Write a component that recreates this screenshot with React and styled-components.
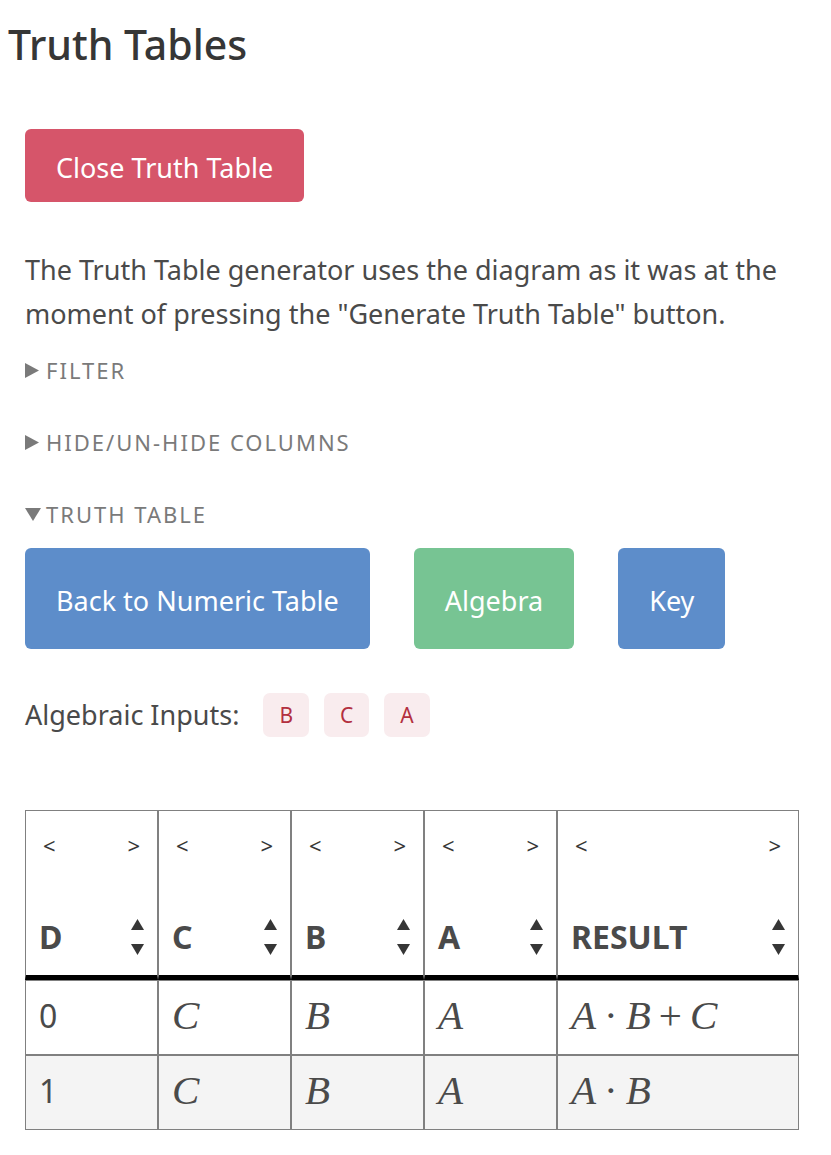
import React from "react";
import styled, { createGlobalStyle } from "styled-components";

const GlobalStyle = createGlobalStyle`
  *, *::before, *::after { box-sizing: border-box; }
  body {
    margin: 0;
    background: #fff;
    color: #4a4a4a;
    font-family: "Segoe UI", "Noto Sans", sans-serif;
    font-size: 27px;
    line-height: 44px;
  }
`;

const Page = styled.main`
  padding: 12px 32px 24px 25px;
`;

const Title = styled.h1`
  margin: 0 0 53px -17px;
  color: #363636;
  font-size: 41px;
  font-weight: 500;
  line-height: 64px;
`;

const COLORS = { danger: "#d6556a", info: "#5d8dca", success: "#77c493" };

const Button = styled.button`
  display: block;
  padding: ${(p) => (p.$tall ? "30px 31px 26px" : "16px 31px 12px")};
  border: 0;
  border-radius: 6px;
  background: ${(p) => COLORS[p.$tone]};
  color: #fff;
  font: inherit;
  line-height: 45px;
  white-space: nowrap;
  cursor: pointer;
`;

const Intro = styled.p`
  margin: 46px 0 12px;
`;

const Section = styled.details`
  margin-bottom: 28px;
`;

const Summary = styled.summary`
  display: flex;
  align-items: center;
  gap: 5px;
  list-style: none;
  color: #7a7a7a;
  font-size: 22px;
  letter-spacing: 2px;
  text-transform: uppercase;
  cursor: pointer;

  &::-webkit-details-marker { display: none; }

  svg {
    width: 16px;
    height: 16px;
    fill: currentColor;
  }
`;

const Toolbar = styled.div`
  display: flex;
  flex-wrap: wrap;
  gap: 44px;
  margin: 12px 0 44px;
`;

const Inputs = styled.div`
  display: flex;
  align-items: center;
  gap: 15px;
  margin-bottom: 73px;
`;

const InputsLabel = styled.span`
  margin-right: 9px;
`;

const Tag = styled.code`
  padding: 0 16px;
  border-radius: 7px;
  background: #f9ecee;
  color: #b3303f;
  font-family: inherit;
  font-size: 21px;
`;

const Table = styled.table`
  width: 100%;
  table-layout: fixed;
  border-collapse: separate;
  border-spacing: 0;
`;

const Column = styled.col`
  width: ${(p) => (p.$wide ? "auto" : "133px")};
`;

const HeadCell = styled.th`
  padding: 12px 13px 14px;
  border: 1px solid #808080;
  border-bottom: 5px solid #000;
  text-align: left;
`;

const HeadRow = styled.div`
  display: flex;
  align-items: center;
  justify-content: space-between;
`;

const MoveRow = styled(HeadRow)`
  padding: 0 4px;
  margin-bottom: 46px;
`;

const MoveButton = styled.button`
  padding: 0;
  border: 0;
  background: none;
  color: #363636;
  font: inherit;
  font-size: 22px;
  font-weight: 400;
  line-height: 44px;
  cursor: pointer;
`;

const ColumnName = styled.span`
  font-size: 32px;
  font-weight: 700;
  line-height: 48px;
`;

const SortButtons = styled.div`
  display: flex;
  flex-direction: column;
  gap: 14px;
`;

const SortButton = styled.button`
  display: block;
  padding: 0;
  border: 0;
  background: none;
  color: #363636;
  cursor: pointer;

  svg {
    display: block;
    width: 13px;
    height: 11px;
    fill: currentColor;
  }
`;

const Row = styled.tr`
  &:nth-child(even) { background: #f4f4f4; }
`;

const Cell = styled.td`
  height: 75px;
  padding: 0 13px 4px;
  border: 1px solid #808080;
  font-size: 32px;
  line-height: 48px;
`;

const Expression = styled.i`
  font-family: "Liberation Serif", serif;
  font-size: 41px;
  white-space: nowrap;
`;

const Operator = styled.span`
  margin: 0 8px;
  font-style: normal;
`;

const COLUMNS = ["D", "C", "B", "A", "RESULT"];
const ROWS = [
  ["0", "C", "B", "A", "A · B + C"],
  ["1", "C", "B", "A", "A · B"],
];

function Disclosure({ label, open, children }) {
  return (
    <Section open={open}>
      <Summary>
        <svg viewBox="0 0 16 16" aria-hidden="true">
          <path d={open ? "M0 2H16L8 15Z" : "M0 1L14 8.500L0 16Z"} />
        </svg>
        {label}
      </Summary>
      {children}
    </Section>
  );
}

function Header({ name }) {
  return (
    <HeadCell scope="col">
      <MoveRow>
        <MoveButton aria-label={`Move ${name} left`}>&lt;</MoveButton>
        <MoveButton aria-label={`Move ${name} right`}>&gt;</MoveButton>
      </MoveRow>
      <HeadRow>
        <ColumnName>{name}</ColumnName>
        <SortButtons>
          <SortButton aria-label={`Sort ${name} ascending`}>
            <svg viewBox="0 0 13 11"><path d="M6.5 0L13 11H0Z" /></svg>
          </SortButton>
          <SortButton aria-label={`Sort ${name} descending`}>
            <svg viewBox="0 0 13 11"><path d="M0 0H13L6.5 11Z" /></svg>
          </SortButton>
        </SortButtons>
      </HeadRow>
    </HeadCell>
  );
}

function Algebra({ text }) {
  return (
    <Expression>
      {text.split(" ").map((part, i) =>
        /[A-Z]/.test(part) ? part : <Operator key={i}>{part}</Operator>
      )}
    </Expression>
  );
}

export default function App() {
  return (
    <>
      <GlobalStyle />
      <Page>
        <Title>Truth Tables</Title>
        <Button $tone="danger">Close Truth Table</Button>
        <Intro>
          The Truth Table generator uses the diagram as it was at the moment of
          pressing the "Generate Truth Table" button.
        </Intro>
        <Disclosure label="Filter" />
        <Disclosure label="Hide/Un-hide Columns" />
        <Disclosure label="Truth Table" open>
          <Toolbar>
            <Button $tone="info" $tall>Back to Numeric Table</Button>
            <Button $tone="success" $tall>Algebra</Button>
            <Button $tone="info" $tall>Key</Button>
          </Toolbar>
          <Inputs>
            <InputsLabel>Algebraic Inputs:</InputsLabel>
            <Tag>B</Tag>
            <Tag>C</Tag>
            <Tag>A</Tag>
          </Inputs>
          <Table>
            <colgroup>
              {COLUMNS.map((name) => (
                <Column key={name} $wide={name === "RESULT"} />
              ))}
            </colgroup>
            <thead>
              <tr>
                {COLUMNS.map((name) => <Header key={name} name={name} />)}
              </tr>
            </thead>
            <tbody>
              {ROWS.map((row) => (
                <Row key={row[0]}>
                  {row.map((value, i) => (
                    <Cell key={COLUMNS[i]}>
                      {i === 0 ? value : <Algebra text={value} />}
                    </Cell>
                  ))}
                </Row>
              ))}
            </tbody>
          </Table>
        </Disclosure>
      </Page>
    </>
  );
}
